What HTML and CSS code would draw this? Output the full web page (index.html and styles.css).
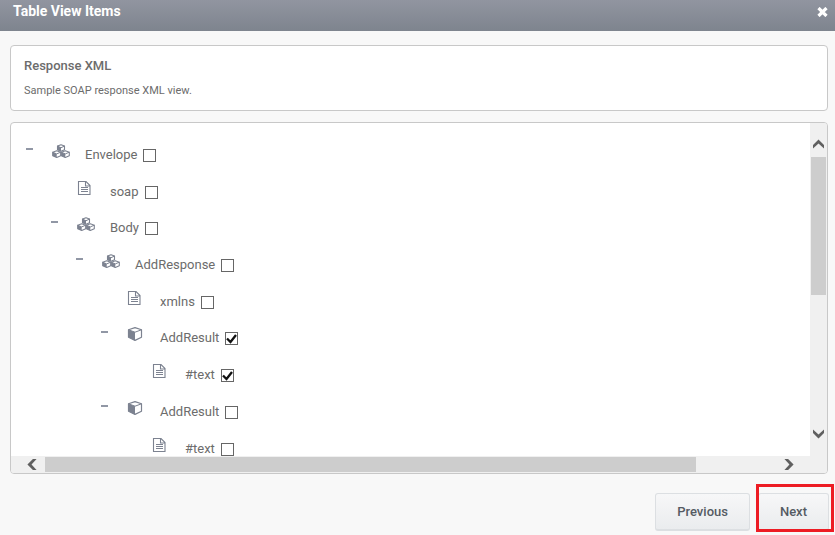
FILE: index.html
```html
<!DOCTYPE html>
<html lang="en">
<head>
  <meta charset="utf-8">
  <meta name="viewport" content="width=device-width, initial-scale=1">
  <title>Table View Items</title>
  <link rel="stylesheet" href="styles.css">
</head>
<body>
  <!-- shared tree icons -->
  <svg class="symbols" aria-hidden="true">
    <symbol id="icon-cubes" viewBox="0 0 18 14">
      <g fill="#fff" stroke="#7c8290" stroke-width="1.1" stroke-linejoin="round">
        <path d="M9 .7l3.500 1.400v3.600L9 7.200 5.500 5.700V2.100z"/>
        <path d="M4.700 6.700L8.700 8.200v3.500l-4 1.700-4-1.700V8.200z"/>
        <path d="M13.300 6.700l4 1.500v3.500l-4 1.700-4-1.700V8.200z"/>
      </g>
      <path fill="#7c8290" d="M5.500 2.100L9 3.800v3.400L5.500 5.700zM.7 8.200l4 1.700v3.500l-4-1.700zM9.300 8.200l4 1.700v3.500l-4-1.700z"/>
      <path fill="none" stroke="#7c8290" d="M5.500 2.100L9 3.700l3.500-1.600M.7 8.200l4 1.700 4-1.700M9.300 8.200l4 1.700 4-1.700"/>
    </symbol>
    <symbol id="icon-cube" viewBox="0 0 18 14">
      <path d="M8 .6l6.500 2.200v7.500L8 13.400l-6.500-3.100V2.800z" fill="#fff" stroke="#7c8290" stroke-width="1.200" stroke-linejoin="round"/>
      <path d="M1.500 2.800L8 5.200v8.200l-6.500-3.100z" fill="#7c8290"/>
      <path d="M1.500 2.800L8 5.200l6.500-2.400" fill="none" stroke="#7c8290"/>
    </symbol>
    <symbol id="icon-file" viewBox="0 0 18 14">
      <path d="M1.500.5h7.500l4 4v9H1.500zM8.500.5v4.500H13" fill="#fff" stroke="#7c8290" stroke-width="1.100"/>
      <path d="M4 6.500h7M4 8.500h7M4 10.500h7" fill="none" stroke="#7c8290"/>
    </symbol>
  </svg>

  <header class="title-bar">
    <h1>Table View Items</h1>
    <button class="close" type="button" aria-label="Close">
      <svg width="11" height="10" viewBox="0 0 11 10"><path d="M1.500 1l8 8M9.500 1l-8 8" stroke="#fff" stroke-width="3.200"/></svg>
    </button>
  </header>

  <main>
    <section class="panel info">
      <h2>Response XML</h2>
      <p>Sample SOAP response XML view.</p>
    </section>

    <section class="panel tree-panel">
      <div class="tree-view">
        <ul class="tree">
          <li>
            <div class="node">
              <button class="toggle" type="button" aria-label="Collapse"></button>
              <svg class="icon"><use href="#icon-cubes"/></svg>
              <label for="envelope">Envelope</label>
              <input type="checkbox" id="envelope">
            </div>
            <ul>
              <li>
                <div class="node attribute">
                  <svg class="icon"><use href="#icon-file"/></svg>
                  <label for="soap">soap</label>
                  <input type="checkbox" id="soap">
                </div>
              </li>
              <li>
                <div class="node">
                  <button class="toggle" type="button" aria-label="Collapse"></button>
                  <svg class="icon"><use href="#icon-cubes"/></svg>
                  <label for="body">Body</label>
                  <input type="checkbox" id="body">
                </div>
                <ul>
                  <li>
                    <div class="node">
                      <button class="toggle" type="button" aria-label="Collapse"></button>
                      <svg class="icon"><use href="#icon-cubes"/></svg>
                      <label for="add-response">AddResponse</label>
                      <input type="checkbox" id="add-response">
                    </div>
                    <ul>
                      <li>
                        <div class="node attribute">
                          <svg class="icon"><use href="#icon-file"/></svg>
                          <label for="xmlns">xmlns</label>
                          <input type="checkbox" id="xmlns">
                        </div>
                      </li>
                      <li>
                        <div class="node">
                          <button class="toggle" type="button" aria-label="Collapse"></button>
                          <svg class="icon"><use href="#icon-cube"/></svg>
                          <label for="result-1">AddResult</label>
                          <input type="checkbox" id="result-1" checked>
                        </div>
                        <ul>
                          <li>
                            <div class="node">
                              <svg class="icon"><use href="#icon-file"/></svg>
                              <label for="text-1">#text</label>
                              <input type="checkbox" id="text-1" checked>
                            </div>
                          </li>
                        </ul>
                      </li>
                      <li>
                        <div class="node">
                          <button class="toggle" type="button" aria-label="Collapse"></button>
                          <svg class="icon"><use href="#icon-cube"/></svg>
                          <label for="result-2">AddResult</label>
                          <input type="checkbox" id="result-2">
                        </div>
                        <ul>
                          <li>
                            <div class="node">
                              <svg class="icon"><use href="#icon-file"/></svg>
                              <label for="text-2">#text</label>
                              <input type="checkbox" id="text-2">
                            </div>
                          </li>
                        </ul>
                      </li>
                    </ul>
                  </li>
                </ul>
              </li>
            </ul>
          </li>
        </ul>
      </div>

      <div class="scrollbar vertical">
        <button type="button" aria-label="Scroll up"><svg width="11" height="10" viewBox="0 0 12 10"><path d="M0 6l6-6 6 6v4L6 4.500 0 10z"/></svg></button>
        <div class="track"><div class="thumb"></div></div>
        <button type="button" aria-label="Scroll down"><svg width="11" height="10" viewBox="0 0 12 10"><path d="M0 4l6 6 6-6V0L6 5.500 0 0z"/></svg></button>
      </div>
      <div class="scrollbar horizontal">
        <button type="button" aria-label="Scroll left"><svg width="10" height="11" viewBox="0 0 10 12"><path d="M6 0L0 6l6 6h4L4.500 6 10 0z"/></svg></button>
        <div class="track"><div class="thumb"></div></div>
        <button type="button" aria-label="Scroll right"><svg width="10" height="11" viewBox="0 0 10 12"><path d="M4 0l6 6-6 6H0l5.500-6L0 0z"/></svg></button>
      </div>
      <div class="corner"></div>
    </section>
  </main>

  <footer class="actions">
    <button class="btn" type="button">Previous</button>
    <button class="btn highlight" type="button">Next</button>
  </footer>
</body>
</html>
```

FILE: styles.css
```css
* {
  box-sizing: border-box;
  margin: 0;
  padding: 0;
}

body {
  display: flex;
  flex-direction: column;
  height: 100vh;
  background: #f8f8f8;
  color: #6c6c6c;
  font-family: Roboto, "Liberation Sans", sans-serif;
  font-size: 13px;
  overflow: hidden;
}

button {
  border: none;
  background: none;
  font: inherit;
  cursor: pointer;
}

svg {
  display: block;
}

.symbols {
  position: absolute;
  width: 0;
  height: 0;
}

.title-bar {
  display: flex;
  justify-content: space-between;
  align-items: center;
  height: 31px;
  padding: 0 7px 8px 13px;
  background: linear-gradient(#9195a0, #7e848e);
  color: #fff;
}

.title-bar h1 {
  font-size: 14px;
  font-weight: 700;
  line-height: 23px;
}

main {
  display: flex;
  flex: 1;
  flex-direction: column;
  gap: 11px;
  min-height: 0;
  padding: 14px 7px 0 10px;
}

.panel {
  border: 1px solid #c8c8c8;
  border-radius: 4px;
  background: #fff;
}

.info {
  padding: 10px 13px;
}

.info h2 {
  font-size: 13px;
  font-weight: 500;
  line-height: 20px;
}

.info p {
  margin-top: 6px;
  font-size: 11px;
  line-height: 18px;
}

.tree-panel {
  display: grid;
  flex: 1;
  grid-template: 1fr 17px / 1fr 17px;
  min-height: 0;
  overflow: hidden;
}

.tree-view {
  padding: 13px 0 0 14px;
  overflow: hidden;
}

.tree,
.tree ul {
  list-style: none;
}

.tree ul {
  padding-left: 25px;
}

.node {
  display: grid;
  grid-template-columns: 27px 33px auto auto;
  justify-content: start;
  align-items: start;
  height: 37px;
}

.attribute {
  height: 36px;
}

.toggle {
  grid-column: 1;
  width: 9px;
  height: 26px;
  background: linear-gradient(#9197a5, #9197a5) center / 7px 2px no-repeat;
}

.icon {
  grid-column: 2;
  width: 18px;
  height: 14px;
  margin-top: 8px;
}

.node label {
  line-height: 38px;
}

.node input {
  width: 13px;
  height: 13px;
  margin: 13px 0 0 6px;
  border: 1px solid #666;
  background: #fff;
  appearance: none;
}

.node input:checked {
  background: #fff url("data:image/svg+xml,%3Csvg xmlns='http://www.w3.org/2000/svg' viewBox='0 0 11 11'%3E%3Cpath d='M1 5.500l3.500 3.500L10 2' fill='none' stroke='%23111' stroke-width='2.300'/%3E%3C/svg%3E");
}

.scrollbar {
  display: flex;
  background: #f0f0f0;
}

.scrollbar button {
  display: flex;
  flex: none;
  justify-content: center;
  align-items: center;
}

.scrollbar path {
  fill: #606060;
}

.track {
  flex: 1;
}

.thumb {
  background: #cdcdcd;
}

.vertical {
  flex-direction: column;
}

.vertical button {
  height: 34px;
}

.vertical button:first-child {
  padding-top: 8px;
}

.vertical button:last-child {
  padding-bottom: 10px;
}

.vertical .thumb {
  height: 52%;
  margin: 0 1px;
}

.horizontal button {
  width: 34px;
}

.horizontal button:first-child {
  padding-left: 8px;
}

.horizontal button:last-child {
  padding-right: 9px;
}

.horizontal .thumb {
  width: 89%;
  height: 15px;
  margin: 1px 0;
}

.corner {
  background: #f0f0f0;
}

.actions {
  display: flex;
  justify-content: flex-end;
  gap: 8px;
  padding: 19px 6px 4px;
}

.btn {
  position: relative;
  height: 38px;
  padding: 0 21px;
  border: 1px solid #dcdfe2;
  border-bottom-width: 2px;
  border-radius: 3px;
  background: linear-gradient(#f7f7f8, #eaecee);
  color: #555b63;
  font-weight: 500;
}

/* marks the next step */
.highlight::after {
  position: absolute;
  inset: -10px -6px -3px -3px;
  border: 3px solid #ed1c24;
  content: "";
}
```
